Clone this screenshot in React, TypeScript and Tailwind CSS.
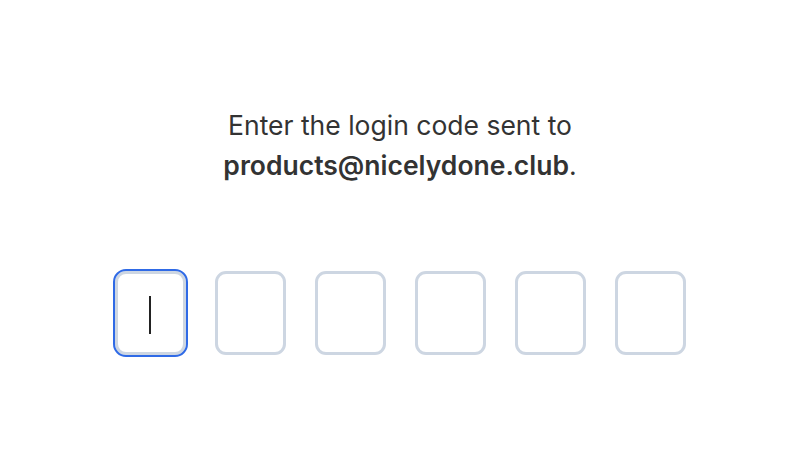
import { useEffect, useRef } from 'react';

const DIGITS = 6;

export default function App() {
  const firstRef = useRef<HTMLInputElement>(null);

  useEffect(() => {
    firstRef.current?.focus();
  }, []);

  return (
    <div className="min-h-[472px] w-full bg-white flex flex-col items-center pt-[105px] font-['Inter',sans-serif] text-[#333333]">
      <p className="text-center text-[26.5px] leading-[40px]">
        Enter the login code sent to
        <br />
        <span className="font-semibold">products@nicelydone.club</span>.
      </p>

      <div className="mt-[86px] flex gap-[29px]">
        {Array.from({ length: DIGITS }).map((_, i) => (
          <div
            key={i}
            className={
              'relative w-[71px] h-[84px] rounded-[11px] border-[3px] border-[#cdd6e2] bg-white ' +
              (i === 0 ? 'outline-2 outline-offset-0 outline-[#2f6ae6]' : '')
            }
          >
            {i === 0 && (
              <span className="absolute left-1/2 top-[22px] h-[38px] w-[2px] -translate-x-1/2 bg-[#222222]" />
            )}
          </div>
        ))}
      </div>
    </div>
  );
}
